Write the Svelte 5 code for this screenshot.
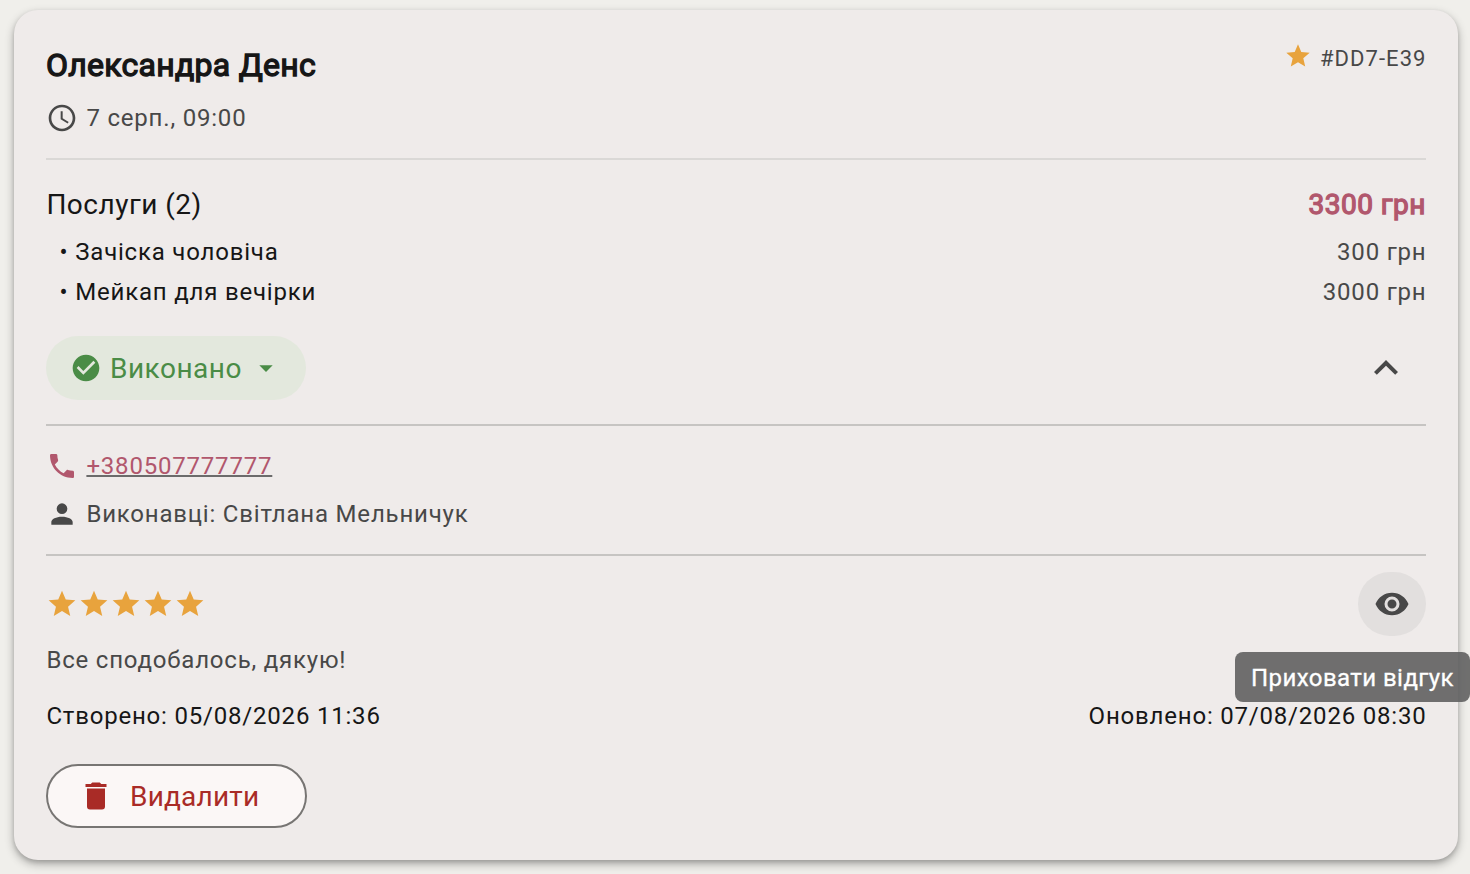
<script>
    const icons = {
        star: 'M12 17.27L18.18 21l-1.64-7.03L22 9.24l-7.19-.61L12 2 9.19 8.63 2 9.24l5.46 4.73L5.82 21z',
        clock: 'M12 20c4.42 0 8-3.58 8-8s-3.58-8-8-8-8 3.58-8 8 3.58 8 8 8m0-18c5.52 0 10 4.48 10 10s-4.48 10-10 10S2 17.52 2 12 6.48 2 12 2m.5 5v5.25l4.5 2.67-.75 1.23L11 13V7z',
        check: 'M12 2C6.48 2 2 6.48 2 12s4.48 10 10 10 10-4.48 10-10S17.52 2 12 2zm-2 15l-5-5 1.41-1.41L10 14.17l7.59-7.59L19 8z',
        down: 'M7 10l5 5 5-5z',
        up: 'M12 8l-6 6 1.41 1.41L12 10.83l4.59 4.58L18 14z',
        phone: 'M6.62 10.79c1.44 2.83 3.76 5.14 6.59 6.59l2.2-2.2c.27-.27.67-.36 1.02-.24 1.12.37 2.33.57 3.57.57.55 0 1 .45 1 1V20c0 .55-.45 1-1 1-9.39 0-17-7.61-17-17 0-.55.45-1 1-1h3.5c.55 0 1 .45 1 1 0 1.25.2 2.45.57 3.57.11.35.03.74-.25 1.02z',
        person: 'M12 4a4 4 0 1 1 0 8 4 4 0 0 1 0-8m0 10c4.42 0 8 1.79 8 4v2H4v-2c0-2.21 3.58-4 8-4z',
        eye: 'M12 9a3 3 0 1 0 0 6 3 3 0 0 0 0-6m0 8a5 5 0 1 1 0-10 5 5 0 0 1 0 10m0-12.5C7 4.5 2.73 7.61 1 12c1.73 4.39 6 7.5 11 7.5s9.27-3.11 11-7.5c-1.73-4.39-6-7.5-11-7.5z',
        trash: 'M19 4h-3.5l-1-1h-5l-1 1H5v2h14M6 19a2 2 0 0 0 2 2h8a2 2 0 0 0 2-2V7H6z'
    };

    const services = [
        { name: 'Зачіска чоловіча', price: 300 },
        { name: 'Мейкап для вечірки', price: 3000 }
    ];
    const total = services.reduce((sum, s) => sum + s.price, 0);

    let expanded = $state(true);
    let hidden = $state(false);
</script>

{#snippet icon(name, size = 32)}
    <svg width={size} height={size} viewBox="0 0 24 24" fill="currentColor" aria-hidden="true">
        <path d={icons[name]} />
    </svg>
{/snippet}

<main>
<article class="card">
    <header class="row top">
        <h2>Олександра Денс</h2>
        <div class="number">
            <span class="gold">{@render icon('star', 28)}</span>
            <span class="code">#DD7-E39</span>
        </div>
    </header>
    <div class="line date">
        {@render icon('clock')}
        <span>7 серп., 09:00</span>
    </div>

    <hr class="light">

    <div class="row services">
        <span>Послуги ({services.length})</span>
        <strong>{total} грн</strong>
    </div>
    {#each services as service}
        <div class="row service">
            <span>• {service.name}</span>
            <span class="price">{service.price} грн</span>
        </div>
    {/each}

    <div class="row actions">
        <button class="status">
            {@render icon('check')}
            <span>Виконано</span>
            {@render icon('down')}
        </button>
        <button class="toggle" aria-label="Деталі" onclick={() => expanded = !expanded}>
            {@render icon('up', 48)}
        </button>
    </div>

    {#if expanded}
        <hr>
        <div class="line contact">
            {@render icon('phone')}
            <a href="tel:+380507777777">+380507777777</a>
        </div>
        <div class="line staff">
            {@render icon('person')}
            <span>Виконавці: Світлана Мельничук</span>
        </div>
        <hr>

        <div class="row review">
            <div class="rating gold">
                {#each Array(5) as _}
                    {@render icon('star')}
                {/each}
            </div>
            <div class="visibility">
                <button class="eye" aria-label="Приховати відгук" onclick={() => hidden = !hidden}>
                    {@render icon('eye', 36)}
                </button>
                <div class="tooltip">Приховати відгук</div>
            </div>
        </div>
        <p class:hidden>Все сподобалось, дякую!</p>
        <div class="row dates">
            <span>Створено: 05/08/2026 11:36</span>
            <span>Оновлено: 07/08/2026 08:30</span>
        </div>
        <button class="delete">
            {@render icon('trash', 36)}
            <span>Видалити</span>
        </button>
    {/if}
</article>
</main>

<style>
    :global(body) {
        background: #f0efeb;
    }
    main {
        box-sizing: border-box;
        height: 874px;
        padding: 10px 12px 14px 14px;
        overflow: hidden;
    }
    .card {
        box-sizing: border-box;
        height: 850px;
        padding: 32px;
        border-radius: 24px;
        background: #efebea;
        box-shadow: 0 4px 10px rgba(0, 0, 0, .3), 0 2px 4px rgba(0, 0, 0, .12);
        color: #161616;
        font: 24px/32px Roboto, sans-serif;
        letter-spacing: .8px;
        text-indent: .4px;
    }
    svg {
        display: block;
        flex: none;
    }
    button {
        border: none;
        padding: 0;
        font: inherit;
        letter-spacing: inherit;
        cursor: pointer;
    }
    .row {
        display: flex;
        justify-content: space-between;
        align-items: center;
    }
    .top {
        align-items: flex-start;
    }
    h2 {
        margin: -1px 0 1px;
        font-size: 32px;
        line-height: 48px;
        font-weight: 400;
        letter-spacing: .26px;
        text-indent: 0;
        -webkit-text-stroke: 1.3px;
    }
    .number {
        display: flex;
        gap: 8px;
        color: #484848;
        font-size: 22px;
        letter-spacing: 1.05px;
    }
    .code {
        padding-top: 1px;
        margin-right: -.5px;
    }
    .gold {
        color: #e8a33d;
    }
    .line {
        display: flex;
        align-items: center;
        gap: 8px;
        color: #484848;
    }
    .date {
        margin-top: 12px;
    }
    hr {
        height: 2px;
        margin: 24px 0;
        border: none;
        background: #c6c4c2;
    }
    hr.light {
        background: #dad8d6;
    }
    .services {
        height: 42px;
        margin-bottom: 10px;
        font-size: 28px;
        letter-spacing: .5px;
    }
    .services strong {
        color: #b1576d;
        font-weight: 400;
        -webkit-text-stroke: 1.3px;
    }
    .service {
        margin-bottom: 8px;
        padding-left: 13.2px;
    }
    .price {
        margin-right: -.5px;
        color: #484848;
    }
    .actions {
        margin-top: 28px;
    }
    .status {
        display: flex;
        align-items: center;
        gap: 8px;
        height: 64px;
        padding: 0 24px;
        border-radius: 32px;
        background: #e3e8dd;
        color: #4a8c46;
        font-size: 28px;
        letter-spacing: .5px;
    }
    .status span {
        padding-top: 1px;
    }
    .toggle {
        padding: 8px 16px;
        background: none;
        color: #484848;
    }
    .contact {
        color: #b1576d;
    }
    .contact a {
        color: inherit;
        text-decoration: underline 2px #6b6b6b;
        text-decoration-skip-ink: none;
    }
    .staff {
        margin-top: 16px;
    }
    .review {
        margin-top: -8px;
    }
    .rating {
        display: flex;
    }
    .visibility {
        position: relative;
    }
    .eye {
        display: block;
        padding: 14px 16px;
        border-radius: 32px;
        background: #e2dfde;
        color: #484848;
    }
    .tooltip {
        position: absolute;
        top: 80px;
        right: -44px;
        box-sizing: border-box;
        height: 50px;
        padding: 10px 16px 8px;
        border-radius: 8px;
        background: rgba(97, 97, 97, .9);
        color: #fff;
        letter-spacing: .43px;
        white-space: nowrap;
        -webkit-text-stroke: .3px;
    }
    p {
        margin: 8px 0 24px;
        color: #484848;
    }
    p.hidden {
        opacity: .5;
    }
    .dates span:last-child {
        margin-right: -.5px;
    }
    .delete {
        display: flex;
        align-items: center;
        gap: 16px;
        box-sizing: border-box;
        height: 64px;
        margin-top: 32px;
        padding: 0 46px 0 30px;
        border: 2px solid #777573;
        border-radius: 32px;
        background: #fbf7f6;
        color: #a92b26;
        font-size: 28px;
        letter-spacing: .2px;
    }
    .delete span {
        padding-top: 1px;
    }
</style>
